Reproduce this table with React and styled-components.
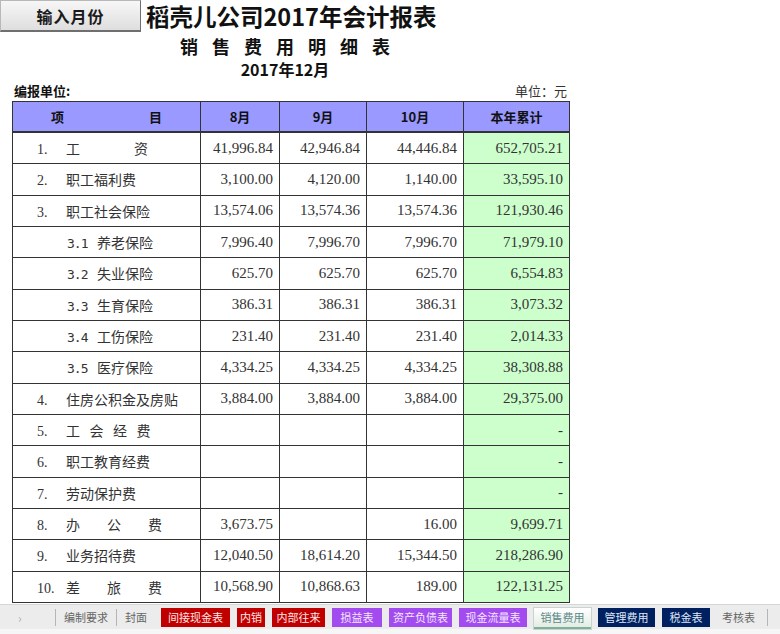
import styled, { createGlobalStyle } from "styled-components";

const GlobalStyle = createGlobalStyle`
  html, body {
    margin: 0;
    padding: 0;
    background: #ffffff;
  }
  body {
    font-family: "Noto Sans CJK SC", "Noto Sans", sans-serif;
  }
`;

// spread = letter-spacing used by the sheet to stretch short item names
const rows = [
  { no: "1.", name: "工资", spread: 54, m8: "41,996.84", m9: "42,946.84", m10: "44,446.84", total: "652,705.21" },
  { no: "2.", name: "职工福利费", m8: "3,100.00", m9: "4,120.00", m10: "1,140.00", total: "33,595.10" },
  { no: "3.", name: "职工社会保险", m8: "13,574.06", m9: "13,574.36", m10: "13,574.36", total: "121,930.46" },
  { sub: "3.1", name: "养老保险", m8: "7,996.40", m9: "7,996.70", m10: "7,996.70", total: "71,979.10" },
  { sub: "3.2", name: "失业保险", m8: "625.70", m9: "625.70", m10: "625.70", total: "6,554.83" },
  { sub: "3.3", name: "生育保险", m8: "386.31", m9: "386.31", m10: "386.31", total: "3,073.32" },
  { sub: "3.4", name: "工伤保险", m8: "231.40", m9: "231.40", m10: "231.40", total: "2,014.33" },
  { sub: "3.5", name: "医疗保险", m8: "4,334.25", m9: "4,334.25", m10: "4,334.25", total: "38,308.88" },
  { no: "4.", name: "住房公积金及房贴", m8: "3,884.00", m9: "3,884.00", m10: "3,884.00", total: "29,375.00" },
  { no: "5.", name: "工会经费", spread: 9.5, m8: "", m9: "", m10: "", total: "-" },
  { no: "6.", name: "职工教育经费", m8: "", m9: "", m10: "", total: "-" },
  { no: "7.", name: "劳动保护费", m8: "", m9: "", m10: "", total: "-" },
  { no: "8.", name: "办公费", spread: 27, m8: "3,673.75", m9: "", m10: "16.00", total: "9,699.71" },
  { no: "9.", name: "业务招待费", m8: "12,040.50", m9: "18,614.20", m10: "15,344.50", total: "218,286.90" },
  { no: "10.", name: "差旅费", spread: 27, m8: "10,568.90", m9: "10,868.63", m10: "189.00", total: "122,131.25" },
];

const tabs = [
  { label: "间接现金表", kind: "red", width: 69 },
  { label: "内销", kind: "red", width: 28 },
  { label: "内部往来", kind: "red", width: 53 },
  { label: "损益表", kind: "purple", width: 50 },
  { label: "资产负债表", kind: "purple", width: 63 },
  { label: "现金流量表", kind: "purple", width: 68 },
  { label: "销售费用", kind: "active", width: 57 },
  { label: "管理费用", kind: "navy", width: 57 },
  { label: "税金表", kind: "navy", width: 48 },
];

const tabColors = {
  red: { bg: "#c00000", fg: "#ffe6e6" },
  purple: { bg: "#a24cf0", fg: "#f3e6ff" },
  navy: { bg: "#002060", fg: "#dfe6f5" },
  active: { bg: "linear-gradient(#ffffff, #e4ece4)", fg: "#5a8a86" },
};

const Page = styled.div`
  width: 780px;
  height: 634px;
  display: flex;
  flex-direction: column;
  overflow: hidden;
`;

const Sheet = styled.div`
  flex: 1;
  overflow: hidden;
  width: 570px;
`;

const TopRow = styled.div`
  display: flex;
  align-items: flex-start;
  gap: 5px;
  height: 33px;
`;

const MonthButton = styled.button`
  width: 141px;
  height: 32px;
  margin: 0;
  padding: 0;
  background: linear-gradient(#f7f7f7, #dedede);
  border: 1px solid #b8b8b8;
  border-right-color: #6f6f6f;
  border-bottom: 2px solid #6f6f6f;
  font-family: "Noto Sans CJK SC", sans-serif;
  font-size: 16px;
  font-weight: 700;
  color: #1a1a1a;
  letter-spacing: 1px;
`;

const Title = styled.h1`
  margin: 0;
  font-size: 23.5px;
  line-height: 32px;
  font-weight: 700;
  color: #111;
  white-space: nowrap;
`;

const SubTitle = styled.h2`
  margin: 0;
  padding-left: 14px;
  text-align: center;
  font-size: 18px;
  line-height: 26px;
  font-weight: 700;
  letter-spacing: 14px;
  color: #111;
`;

const DateLine = styled.div`
  text-align: center;
  font-size: 16px;
  line-height: 20px;
  font-weight: 700;
  color: #111;
`;

const UnitRow = styled.div`
  display: flex;
  justify-content: space-between;
  align-items: center;
  height: 22px;
  padding: 0 3px 0 14px;
  font-size: 13px;

  > .org {
    font-weight: 700;
    color: #111;
  }
  > .unit {
    color: #333;
  }
`;

const Table = styled.table`
  margin-left: 12px;
  border-collapse: collapse;
  table-layout: fixed;
  width: 557px;
  border: 1px solid #333;
  font-family: "Liberation Serif", "Noto Sans CJK SC", serif;
  color: #333;
`;

const HeadCell = styled.th`
  height: 29px;
  background: #9999ff;
  border: 1px solid #333;
  border-bottom: 2px solid #333;
  font-family: "Noto Sans CJK SC", sans-serif;
  font-size: 13px;
  font-weight: 700;
  color: #111;
  padding: 0;

  > .split {
    display: flex;
    justify-content: space-between;
    padding: 0 38px;
  }
`;

const Cell = styled.td`
  height: 30.33px;
  border: 1px solid #333;
  padding: 0 6px;
  font-size: 15px;
  text-align: right;
  white-space: nowrap;
  background: ${({ $total }) => ($total ? "#ccffcc" : "#ffffff")};
`;

const NameCell = styled.td`
  height: 30.33px;
  border: 1px solid #333;
  padding: 0;
  font-size: 14px;
  white-space: nowrap;
  padding-left: ${({ $sub }) => ($sub ? "54px" : "24px")};

  > .no {
    display: inline-block;
    width: ${({ $sub }) => ($sub ? "30px" : "29px")};
    font-family: ${({ $sub }) =>
      $sub ? '"DejaVu Sans Mono", monospace' : '"Liberation Serif", serif'};
    font-size: ${({ $sub }) => ($sub ? "13px" : "14px")};
    letter-spacing: ${({ $sub }) => ($sub ? "-1px" : "0")};
  }
`;

const ItemName = styled.span`
  font-family: "Noto Sans CJK SC", sans-serif;
  font-weight: 400;
  letter-spacing: ${({ $spread }) => $spread || 0}px;
`;

const TabBar = styled.div`
  height: 30px;
  flex-shrink: 0;
  background: linear-gradient(#ececec 0, #ececec 24px, #f6f6f6 24px);
  border-top: 1px solid #d6d6d6;
  display: flex;
  align-items: flex-start;
  padding-top: 3px;
  box-sizing: border-box;
  font-size: 11px;
`;

const Arrow = styled.span`
  width: 55px;
  padding-left: 18px;
  box-sizing: border-box;
  color: #b0b0b0;
  line-height: 19px;
  font-size: 12px;
`;

const Divider = styled.span`
  width: 1px;
  height: 17px;
  margin-top: 1px;
  background: #b5b5b5;
`;

const PlainTab = styled.span`
  height: 19px;
  line-height: 19px;
  padding: 0 ${({ $pad }) => $pad}px;
  color: #666;
`;

const SheetTab = styled.span`
  width: ${({ $width }) => $width}px;
  height: 19px;
  line-height: 19px;
  margin-left: ${({ $gap }) => $gap}px;
  text-align: center;
  background: ${({ $kind }) => tabColors[$kind].bg};
  color: ${({ $kind }) => tabColors[$kind].fg};
  border-bottom: ${({ $kind }) => ($kind === "active" ? "2px solid #7fb09a" : "none")};
  box-shadow: ${({ $kind }) => ($kind === "active" ? "0 0 0 1px #c8d4d0" : "none")};
  white-space: nowrap;
`;

function App() {
  return (
    <Page>
      <GlobalStyle />
      <Sheet>
        <TopRow>
          <MonthButton>输入月份</MonthButton>
          <Title>稻壳儿公司2017年会计报表</Title>
        </TopRow>
        <SubTitle>销售费用明细表</SubTitle>
        <DateLine>2017年12月</DateLine>
        <UnitRow>
          <span className="org">编报单位:</span>
          <span className="unit">单位：元</span>
        </UnitRow>
        <Table>
          <colgroup>
            <col style={{ width: 188 }} />
            <col style={{ width: 79 }} />
            <col style={{ width: 87 }} />
            <col style={{ width: 97 }} />
            <col style={{ width: 106 }} />
          </colgroup>
          <thead>
            <tr>
              <HeadCell>
                <div className="split">
                  <span>项</span>
                  <span>目</span>
                </div>
              </HeadCell>
              <HeadCell>8月</HeadCell>
              <HeadCell>9月</HeadCell>
              <HeadCell>10月</HeadCell>
              <HeadCell>本年累计</HeadCell>
            </tr>
          </thead>
          <tbody>
            {rows.map((r) => (
              <tr key={r.sub || r.no}>
                <NameCell $sub={!!r.sub}>
                  <span className="no">{r.sub || r.no}</span>
                  <ItemName $spread={r.spread}>{r.name}</ItemName>
                </NameCell>
                <Cell>{r.m8}</Cell>
                <Cell>{r.m9}</Cell>
                <Cell>{r.m10}</Cell>
                <Cell $total>{r.total}</Cell>
              </tr>
            ))}
          </tbody>
        </Table>
      </Sheet>
      <TabBar>
        <Arrow>›</Arrow>
        <Divider />
        <PlainTab $pad={8}>编制要求</PlainTab>
        <Divider />
        <PlainTab $pad={8}>封面</PlainTab>
        {tabs.map((t, i) => (
          <SheetTab key={t.label} $kind={t.kind} $width={t.width} $gap={i === 0 ? 6 : 7}>
            {t.label}
          </SheetTab>
        ))}
        <PlainTab $pad={12}>考核表</PlainTab>
        <Divider />
      </TabBar>
    </Page>
  );
}

export default App;
